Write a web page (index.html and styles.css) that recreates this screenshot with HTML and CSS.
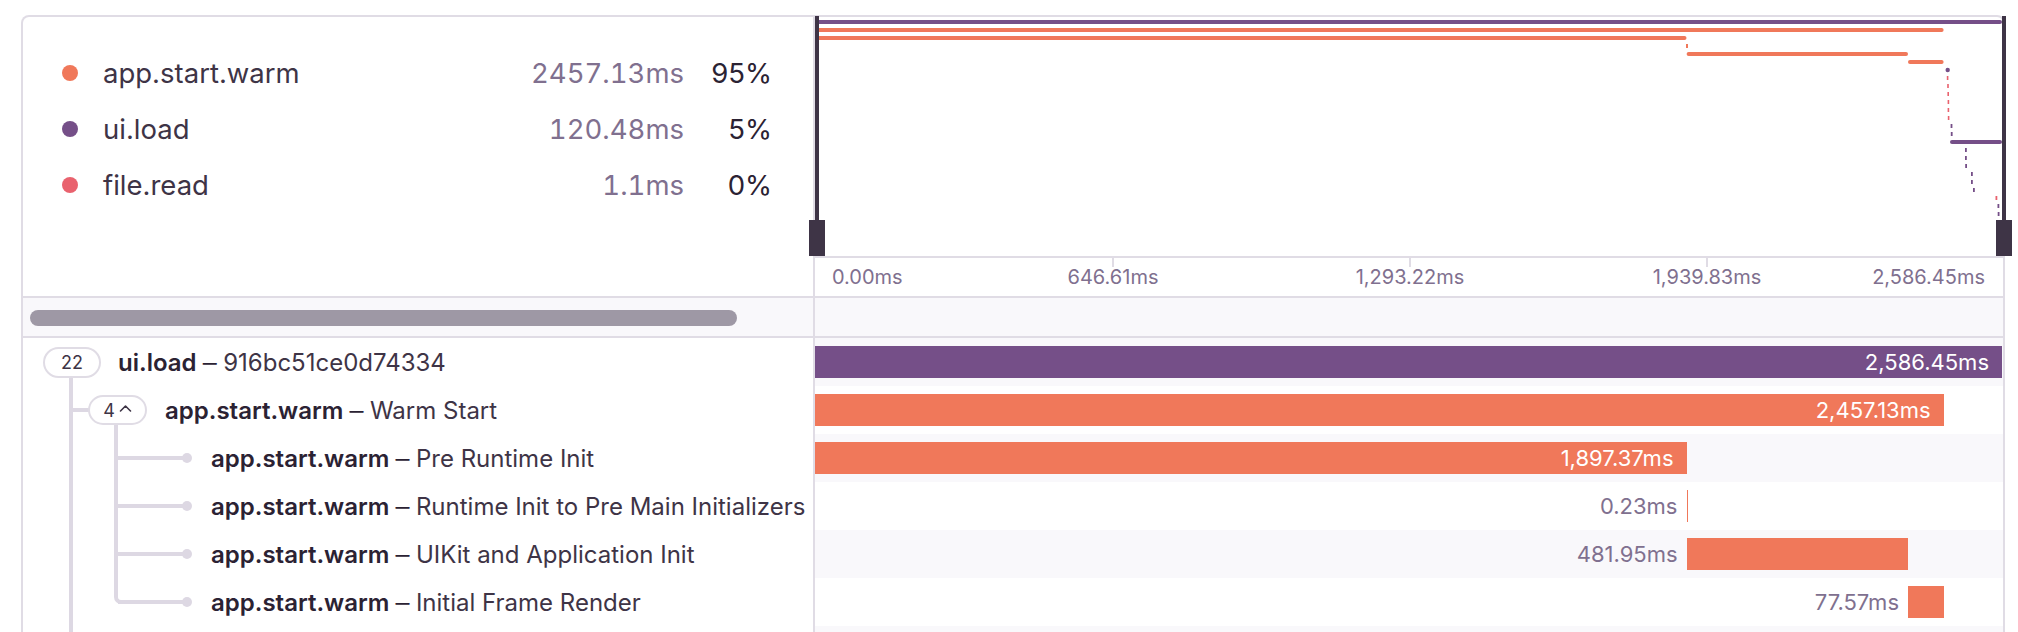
FILE: index.html
```html
<!DOCTYPE html>
<html lang="en">
<head>
<meta charset="utf-8">
<title>Trace view</title>
<link rel="stylesheet" href="styles.css">
</head>
<body>
<div class="panel">
  <div class="header">
    <div class="legend">
      <div class="legend-row"><span class="dot c-orange"></span><span class="op">app.start.warm</span><span class="dur">2457.13ms</span><span class="pct">95%</span></div>
      <div class="legend-row"><span class="dot c-purple"></span><span class="op">ui.load</span><span class="dur">120.48ms</span><span class="pct">5%</span></div>
      <div class="legend-row"><span class="dot c-pink"></span><span class="op">file.read</span><span class="dur">1.1ms</span><span class="pct">0%</span></div>
    </div>
    <div class="overview">
      <div class="minimap">
        <svg class="spans" width="1188" height="239" viewBox="0 0 1188 239">
          <rect x="0" y="3" width="1187" height="4" rx="2" fill="#754f88"/>
          <rect x="0" y="11" width="1128.6" height="4" rx="2" fill="#f0785a"/>
          <rect x="0" y="19" width="871.5" height="4" rx="2" fill="#f0785a"/>
          <rect x="871" y="27" width="2" height="4" fill="#f0785a"/>
          <rect x="871.6" y="35" width="221.4" height="4" rx="2" fill="#f0785a"/>
          <rect x="1093" y="43" width="35.6" height="4" rx="2" fill="#f0785a"/>
          <circle cx="1132.7" cy="53" r="2.2" fill="#754f88"/>
          <rect x="1131.8" y="59" width="1.6" height="4" fill="#e9626e"/>
          <rect x="1132.2" y="67" width="1.6" height="4" fill="#e9626e"/>
          <rect x="1132.4" y="75" width="1.6" height="4" fill="#e9626e"/>
          <rect x="1132.6" y="83" width="1.6" height="4" fill="#e9626e"/>
          <rect x="1132.6" y="91" width="1.6" height="4" fill="#e9626e"/>
          <rect x="1132.8" y="99" width="1.6" height="4" fill="#e9626e"/>
          <rect x="1135.6" y="107" width="1.8" height="4" fill="#754f88"/>
          <rect x="1135.8" y="115" width="1.8" height="4" fill="#754f88"/>
          <rect x="1135" y="123" width="52" height="4" rx="2" fill="#754f88"/>
          <rect x="1150" y="131" width="1.8" height="4" fill="#754f88"/>
          <rect x="1150" y="139" width="1.8" height="4" fill="#754f88"/>
          <rect x="1150.2" y="147" width="1.8" height="4" fill="#754f88"/>
          <rect x="1156" y="155" width="1.8" height="4" fill="#754f88"/>
          <rect x="1156" y="163" width="1.8" height="4" fill="#754f88"/>
          <rect x="1158" y="171" width="1.8" height="4" fill="#754f88"/>
          <rect x="1180.5" y="179" width="1.8" height="4" fill="#e9626e"/>
          <rect x="1182.5" y="187" width="1.8" height="4" fill="#754f88"/>
          <rect x="1182.7" y="195" width="1.8" height="4" fill="#754f88"/>
        </svg>
        <div class="handle handle-left"><span class="handle-line"></span><span class="handle-grip"></span></div>
        <div class="handle handle-right"><span class="handle-line"></span><span class="handle-grip"></span></div>
      </div>
      <div class="axis">
        <span class="tick" style="left:297px"></span>
        <span class="tick" style="left:594px"></span>
        <span class="tick" style="left:891px"></span>
        <span class="tick-label first">0.00ms</span>
        <span class="tick-label mid" style="left:298px">646.61ms</span>
        <span class="tick-label mid" style="left:595px">1,293.22ms</span>
        <span class="tick-label mid" style="left:892px">1,939.83ms</span>
        <span class="tick-label last">2,586.45ms</span>
      </div>
    </div>
  </div>

  <div class="scroll-row">
    <div class="scroll-left"><div class="thumb"></div></div>
    <div class="scroll-right"></div>
  </div>

  <div class="rows">
    <div class="row">
      <div class="tree depth-0">
        <span class="guide outer from-badge"></span>
        <span class="count-badge">22</span>
        <span class="title"><b>ui.load</b><span class="sep"> — </span>916bc51ce0d74334</span>
      </div>
      <div class="track shaded">
        <div class="bar c-purple" style="margin-left:0px;width:1187px"><span class="in-label">2,586.45ms</span></div>
      </div>
    </div>

    <div class="row">
      <div class="tree depth-1">
        <span class="guide outer full"></span>
        <span class="branch to-badge"></span>
        <span class="guide inner from-badge"></span>
        <span class="count-badge small">4<svg class="chev" width="13" height="8" viewBox="0 0 13 8"><polyline points="1.5,7 6.5,2 11.5,7" fill="none" stroke="#3e3446" stroke-width="1.6" stroke-linecap="round" stroke-linejoin="round"/></svg></span>
        <span class="title"><b>app.start.warm</b><span class="sep"> — </span>Warm Start</span>
      </div>
      <div class="track">
        <div class="bar c-orange" style="margin-left:0px;width:1128.6px"><span class="in-label">2,457.13ms</span></div>
      </div>
    </div>

    <div class="row">
      <div class="tree depth-2">
        <span class="guide outer full"></span>
        <span class="guide inner full"></span>
        <span class="branch to-leaf"></span>
        <span class="leaf-dot"></span>
        <span class="title"><b>app.start.warm</b><span class="sep"> — </span>Pre Runtime Init</span>
      </div>
      <div class="track shaded">
        <div class="bar c-orange" style="margin-left:0px;width:871.5px"><span class="in-label">1,897.37ms</span></div>
      </div>
    </div>

    <div class="row">
      <div class="tree depth-2">
        <span class="guide outer full"></span>
        <span class="guide inner full"></span>
        <span class="branch to-leaf"></span>
        <span class="leaf-dot"></span>
        <span class="title"><b>app.start.warm</b><span class="sep"> — </span>Runtime Init to Pre Main Initializers</span>
      </div>
      <div class="track">
        <div class="bar c-orange" style="margin-left:871.5px;width:1.6px"><span class="out-label">0.23ms</span></div>
      </div>
    </div>

    <div class="row">
      <div class="tree depth-2">
        <span class="guide outer full"></span>
        <span class="guide inner full"></span>
        <span class="branch to-leaf"></span>
        <span class="leaf-dot"></span>
        <span class="title"><b>app.start.warm</b><span class="sep"> — </span>UIKit and Application Init</span>
      </div>
      <div class="track shaded">
        <div class="bar c-orange" style="margin-left:871.6px;width:221.4px"><span class="out-label">481.95ms</span></div>
      </div>
    </div>

    <div class="row">
      <div class="tree depth-2">
        <span class="guide outer full"></span>
        <span class="guide inner elbow"></span>
        <span class="branch to-leaf"></span>
        <span class="leaf-dot"></span>
        <span class="title"><b>app.start.warm</b><span class="sep"> — </span>Initial Frame Render</span>
      </div>
      <div class="track">
        <div class="bar c-orange" style="margin-left:1093px;width:35.6px"><span class="out-label">77.57ms</span></div>
      </div>
    </div>

    <div class="row">
      <div class="tree depth-1">
        <span class="guide outer full"></span>
      </div>
      <div class="track shaded"></div>
    </div>
  </div>
</div>
</body>
</html>
```

FILE: styles.css
```css
* {
  box-sizing: border-box;
}

html,
body {
  margin: 0;
  padding: 0;
  background: #ffffff;
}

body {
  width: 2018px;
  height: 632px;
  overflow: hidden;
  font-family: Inter, "Noto Sans", sans-serif;
  color: #2b2233;
}

.panel {
  margin: 15px 0 0 21px;
  width: 1984px;
  border: 2px solid #e0dce5;
  border-bottom: none;
  border-radius: 8px 8px 0 0;
}

/* ---------- header: legend + minimap ---------- */
.header {
  display: grid;
  grid-template-columns: 792px 1188px;
  height: 281px;
  border-bottom: 2px solid #e0dce5;
}

.legend {
  border-right: 2px solid #e0dce5;
  padding: 28px 41px 0 39px;
}

.legend-row {
  display: flex;
  align-items: center;
  height: 56px;
  font-size: 27.5px;
}

.dot {
  width: 16px;
  height: 16px;
  border-radius: 50%;
  margin-right: 25px;
  flex: none;
}

.c-orange { background: #f0785a; }
.c-purple { background: #754f88; }
.c-pink { background: #e9626e; }

.op {
  flex: 1;
  color: #3e3446;
}

.dur {
  color: #80708f;
  font-feature-settings: "tnum";
}

.pct {
  width: 88px;
  text-align: right;
  color: #2b2233;
}

.overview {
  display: flex;
  flex-direction: column;
}

.minimap {
  position: relative;
  height: 239px;
}

.spans {
  display: block;
}

.handle {
  position: absolute;
  top: -1px;
  width: 16px;
  height: 240px;
  display: flex;
  flex-direction: column;
  align-items: center;
}

.handle-left {
  left: -6px;
}

.handle-right {
  left: 1181px;
}

.handle-line {
  width: 4px;
  flex: 1;
  background: #3e3446;
}

.handle-grip {
  width: 16px;
  height: 36px;
  background: #3e3446;
}

.axis {
  position: relative;
  height: 40px;
  border-top: 2px solid #e0dce5;
}

.tick {
  position: absolute;
  top: 0;
  width: 2px;
  height: 9px;
  background: #e0dce5;
}

.tick-label {
  position: absolute;
  top: 0;
  line-height: 38px;
  font-size: 20px;
  color: #80708f;
  white-space: nowrap;
}

.tick-label.first {
  left: 17px;
}

.tick-label.mid {
  transform: translateX(-50%);
}

.tick-label.last {
  right: 18px;
}

/* ---------- scrollbar row ---------- */
.scroll-row {
  display: grid;
  grid-template-columns: 792px 1188px;
  height: 40px;
  background: #f9f8fb;
  border-bottom: 2px solid #e0dce5;
}

.scroll-left {
  border-right: 2px solid #e0dce5;
  padding: 12px 0 0 7px;
}

.thumb {
  width: 707px;
  height: 16px;
  border-radius: 8px;
  background: #9e98a5;
}

/* ---------- rows ---------- */
.rows {
  height: 294px;
  overflow: hidden;
}

.row {
  display: grid;
  grid-template-columns: 792px 1188px;
  height: 48px;
}

.tree {
  position: relative;
  display: flex;
  align-items: center;
  border-right: 2px solid #e0dce5;
  font-size: 24px;
  color: #3e3446;
  white-space: nowrap;
}

.tree.depth-0 {
  padding-left: 20px;
}

.tree.depth-1 {
  padding-left: 65px;
}

.tree.depth-2 {
  padding-left: 188px;
}

.title b {
  font-weight: 600;
  color: #2b2233;
}

.sep {
  font-size: 14px;
  font-weight: 700;
  margin: 0 3px;
  vertical-align: 3px;
  color: #2b2233;
}

.count-badge {
  display: inline-flex;
  align-items: center;
  justify-content: center;
  width: 58px;
  height: 31px;
  border: 2px solid #e0dce5;
  border-radius: 16px;
  background: #ffffff;
  font-size: 18px;
  color: #3e3446;
  margin-right: 17px;
  position: relative;
}

.count-badge.small {
  width: 59px;
  height: 30px;
  margin-right: 18px;
  gap: 4px;
}

.chev {
  margin-top: -5px;
}

.guide,
.branch,
.leaf-dot {
  position: absolute;
  background: #ddd8e3;
}

.guide {
  width: 4px;
}

.guide.outer {
  left: 46px;
}

.guide.inner {
  left: 91px;
}

.guide.full {
  top: 0;
  bottom: 0;
}

.guide.from-badge {
  top: 38px;
  bottom: 0;
}

.guide.elbow {
  top: 0;
  height: 26px;
  width: 30px;
  background: transparent;
  border-left: 4px solid #ddd8e3;
  border-bottom: 4px solid #ddd8e3;
  border-bottom-left-radius: 7px;
}

.branch {
  top: 22px;
  height: 4px;
}

.branch.to-badge {
  left: 46px;
  width: 20px;
}

.branch.to-leaf {
  left: 95px;
  width: 66px;
}

.leaf-dot {
  left: 159px;
  top: 19px;
  width: 10px;
  height: 10px;
  border-radius: 50%;
}

.track {
  display: flex;
  align-items: center;
  background: #ffffff;
}

.track.shaded {
  background: #f9f8fb;
}

.bar {
  position: relative;
  height: 32px;
  flex: none;
  display: flex;
  align-items: center;
  justify-content: flex-end;
}

.in-label {
  padding-right: 13px;
  font-size: 22px;
  color: #ffffff;
  white-space: nowrap;
}

.out-label {
  position: absolute;
  right: calc(100% + 9px);
  top: 0;
  line-height: 32px;
  font-size: 22px;
  color: #80708f;
  white-space: nowrap;
}
```
